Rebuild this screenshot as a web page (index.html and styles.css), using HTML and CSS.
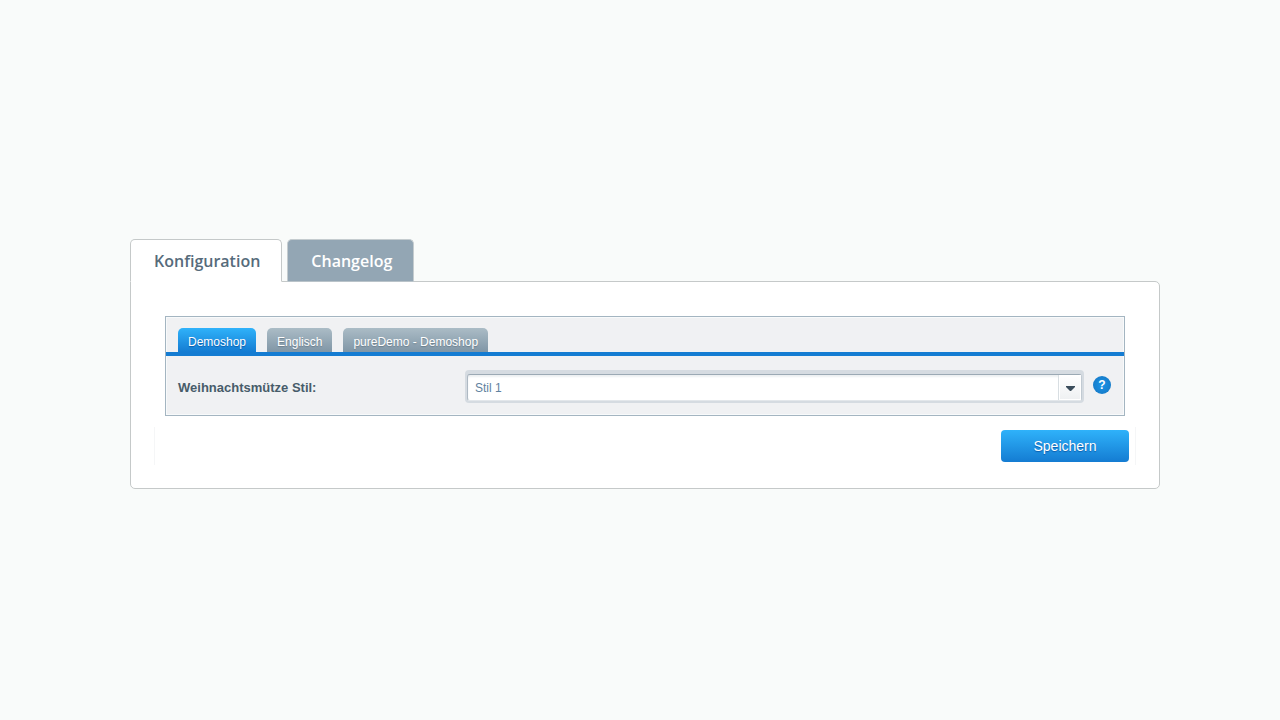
FILE: index.html
```
<!DOCTYPE html>
<html lang="de">
<head>
    <meta charset="UTF-8">
    <meta name="viewport" content="width=device-width, initial-scale=1.0">
    <title>Konfiguration</title>
    <link rel="stylesheet" href="styles.css">
</head>
<body>
    <main>
        <nav class="tabs">
            <button type="button" class="tab active">Konfiguration</button>
            <button type="button" class="tab">Changelog</button>
        </nav>
        <form class="panel">
            <section class="settings">
                <div class="shop-tabs">
                    <button type="button" class="shop-tab active">Demoshop</button>
                    <button type="button" class="shop-tab">Englisch</button>
                    <button type="button" class="shop-tab">pureDemo - Demoshop</button>
                </div>
                <div class="field">
                    <label for="style">Weihnachtsmütze Stil:</label>
                    <div class="select-box">
                        <select id="style">
                            <option>Stil 1</option>
                        </select>
                        <span class="trigger">
                            <svg width="9" height="5" viewBox="0 0 9 5"><path d="M0 0h9v1L5 5H4L0 1z" fill="#3b4d5c"/></svg>
                        </span>
                    </div>
                    <button type="button" class="help" aria-label="Hilfe">?</button>
                </div>
            </section>
            <div class="toolbar">
                <button type="submit" class="save">Speichern</button>
            </div>
        </form>
    </main>
</body>
</html>
```
FILE: styles.css
```
body {
    margin: 0;
    background-color: #f9fbfa;
    font-family: "Liberation Sans", Arial, sans-serif;
}

* {
    box-sizing: border-box;
}

main {
    padding: 239px 120px 0 130px;
}

button {
    margin: 0;
    border: none;
    font-family: inherit;
    cursor: pointer;
}

/* Main tabs */
.tabs {
    display: flex;
    gap: 5px;
}

.tab {
    height: 43px;
    margin-bottom: -1px;
    padding: 0 21px 0 23px;
    border: 1px solid #c5cccf;
    border-bottom-color: #b9c3c9;
    border-radius: 5px 5px 0 0;
    background-color: #93a6b4;
    color: #fff;
    font: 600 16px "Open Sans", sans-serif;
}

.tab.active {
    position: relative;
    border-color: #c5c9c9;
    border-bottom-color: #fff;
    background-color: #fff;
    color: #566b7b;
}

.panel {
    padding: 34px 23px 23px;
    border: 1px solid #c5c9c9;
    border-radius: 0 5px 5px 5px;
    background-color: #fff;
}

/* Shop settings */
.settings {
    margin: 0 11px;
    border: 1px solid #a4b5c1;
    background-color: #f0f1f3;
    box-shadow: inset 0 0 0 1px #f8fafb;
}

.shop-tabs {
    display: flex;
    gap: 11px;
    padding: 11px 12px 0;
    border-bottom: 4px solid #147cd2;
}

.shop-tab {
    height: 24px;
    padding: 4px 10px 0;
    border-radius: 5px 5px 0 0;
    background: linear-gradient(#abbcc6, #8096a6);
    color: #fff;
    font-size: 12px;
    text-shadow: 0 1px 1px #6c7f8d;
}

.shop-tab.active {
    background: linear-gradient(#2fb2fa, #147cd2);
    text-shadow: 0 1px 1px #0b5cab;
}

.field {
    display: flex;
    align-items: center;
    padding: 14px 13px 12px 12px;
}

.field label {
    width: 287px;
    padding-top: 2px;
    color: #475c6a;
    font-size: 13px;
    font-weight: bold;
}

.select-box {
    position: relative;
    flex: 1;
    height: 33px;
    padding: 4px 2px 2px;
    border-radius: 4px;
    background-color: #d5dbe1;
}

.select-box select {
    width: 100%;
    height: 27px;
    padding: 0 30px 0 7px;
    border: 1px solid #aeb9c3;
    border-top-color: #9ba9b4;
    border-right-color: #c1cad2;
    border-bottom-color: #e3e7eb;
    border-radius: 3px;
    background-color: #fff;
    box-shadow: inset 0 2px 2px #edf0f2;
    color: #5f82a0;
    font: 12px "Liberation Sans", Arial, sans-serif;
    appearance: none;
}

/* Arrow lies over the right end of the select */
.trigger {
    position: absolute;
    top: 5px;
    right: 3px;
    display: flex;
    align-items: center;
    justify-content: center;
    width: 23px;
    height: 25px;
    padding-top: 1px;
    border-left: 1px solid #d8dee2;
    background: linear-gradient(#fff, #eef0f2);
    box-shadow: inset 0 0 0 1px #fff;
    pointer-events: none;
}

.help {
    width: 18px;
    height: 18px;
    margin: -4px 0 0 9px;
    padding: 0;
    border-radius: 50%;
    background: radial-gradient(#1a94e8, #1674bf);
    color: #fff;
    font-size: 12px;
    font-weight: bold;
    line-height: 18px;
}

.toolbar {
    display: flex;
    justify-content: flex-end;
    margin-top: 11px;
    padding: 3px 6px;
    border: solid #f5f6f7;
    border-width: 0 1px;
}

.save {
    width: 128px;
    height: 32px;
    border-radius: 4px;
    background: linear-gradient(#2fb2fa, #147cd2);
    color: #fff;
    font-size: 14px;
    text-shadow: 0 1px 1px #0b5cab;
}
```
